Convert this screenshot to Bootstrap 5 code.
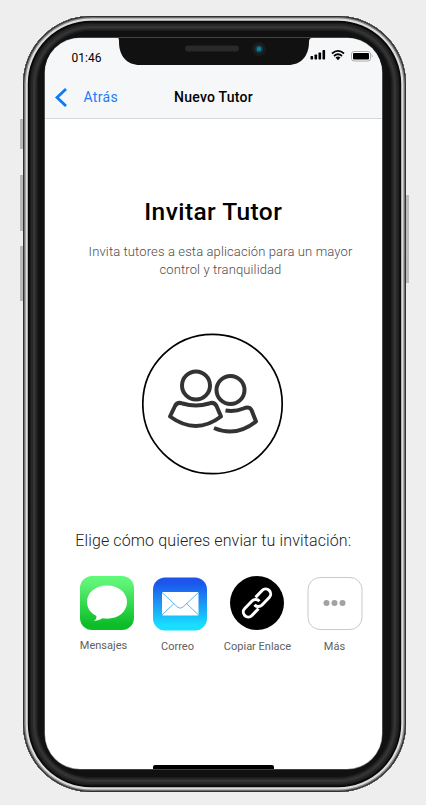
<!DOCTYPE html>
<html lang="es">
<head>
<meta charset="utf-8">
<meta name="viewport" content="width=device-width, initial-scale=1">
<title>Nuevo Tutor</title>
<link href="https://cdn.jsdelivr.net/npm/bootstrap@5.3.0/dist/css/bootstrap.min.css" rel="stylesheet">
<style>
body{background:#eee;font-family:Roboto,sans-serif;height:805px;overflow:hidden;color:#000}
.phone{width:383px;height:776px;margin:16px 0 0 22.5px;padding:22px 23.5px 23px 22px;border-radius:68px;background:#111;
box-shadow:inset 0 0 0 1.2px #303030,inset 0 0 0 2.6px #858585,inset 0 0 0 4.8px #dcdcdc,inset 0 0 0 6.5px #080808,inset 0 0 0 8px #1b1b1b,inset 0 0 0 10px #272727,inset 0 0 0 12px #353535,inset 0 0 0 13.5px #2c2c2c,inset 0 0 0 15px #1c1c1c}
.side{width:3px;background:#b8baba;left:-3px}
.side.right{left:383px;background:#bcbcbc}
.screen{height:731px;background:#fff;border-radius:35px;box-shadow:0 0 0 .6px #777;overflow:hidden}
.top-area{height:81px;background:#f5f7f9;border-bottom:1px solid #d5d7d8}
.notch{left:73px;top:-1px}
.status{height:38px;padding:13px 8px 0 27px;font-size:12px;line-height:15px}
.nav-row{height:42px;padding:0 10px;font-size:14px}
.nav-row a{color:#1f7cf5;width:119.600px;letter-spacing:.35px}
.nav-title{font-weight:500;letter-spacing:.24px}
.heading{font-size:24.500px;font-weight:500;line-height:30px;letter-spacing:.42px;margin-top:78px}
.intro{font-size:13px;font-weight:300;line-height:18px;letter-spacing:.12px;color:#4c4c4c;margin:16px 0 0 14.500px}
.people{width:142px;height:142px;margin:54px auto 0 97px}
.choose{font-size:16px;font-weight:300;line-height:22px;color:#222;letter-spacing:.12px;margin-top:55px}
.options{margin:23px 8px 0 26.500px}
.option{font-size:11px;line-height:14px;color:#606060}
.option svg{width:56px;height:56px;margin-bottom:8px}
.opt-a{width:72px}.opt-a span{padding-right:7px}
.opt-b{width:74px}.opt-b span{padding-right:5px}
.opt-c{width:80px}.opt-c span{padding-left:1px}.opt-d{width:75px}
.opt-b span,.opt-c span,.opt-d span{padding-top:1px}
.home-bar{width:121px;height:4px;left:108px;bottom:0;background:#000;border-radius:2px 2px 0 0}
</style>
<script src="https://cdn.jsdelivr.net/npm/bootstrap@5.3.0/dist/js/bootstrap.bundle.min.js"></script>
</head>
<body>
<div class="phone position-relative">
  <i class="side position-absolute" style="top:103px;height:30px"></i>
  <i class="side position-absolute" style="top:159px;height:56px"></i>
  <i class="side position-absolute" style="top:230px;height:55px"></i>
  <i class="side right position-absolute" style="top:179px;height:88px"></i>
  <main class="screen position-relative d-flex flex-column">
    <header class="top-area flex-shrink-0">
      <svg class="notch position-absolute" width="194" height="29" viewBox="0 0 194 29">
        <path d="M0 0H194V1Q191 1 191 5C191 19 183 28 170 28H22C9 28 1 19 1 5Q1 1 0 1Z" fill="#111"/>
        <rect x="67" y="8.500" width="54" height="6" rx="3" fill="#292929"/>
        <circle cx="141" cy="12" r="7" fill="#1b1b1b"/><circle cx="141" cy="12" r="3.800" fill="#104252"/><circle cx="141" cy="12" r="2.200" fill="#118099"/>
      </svg>
      <div class="status d-flex justify-content-between">
        <span>01:46</span>
        <svg width="64" height="14" viewBox="0 0 64 14" style="margin-top:-3px">
          <g fill="#000"><rect x=".5" y="8" width="2.600" height="3.500" rx=".7"/><rect x="4.500" y="6.500" width="2.600" height="5" rx=".7"/><rect x="8.500" y="4.500" width="2.600" height="7" rx=".7"/><rect x="12.500" y="2" width="2.600" height="9.500" rx=".7"/><path d="M25.500 9.400 28 12.200 30.500 9.400Q28 7.800 25.500 9.400Z"/></g>
          <path d="M22 5.500Q28 .3 34 5.500M24 8Q28 4.500 32 8" fill="none" stroke="#000" stroke-width="1.800"/>
          <rect x="41.500" y="3.500" width="19" height="9.500" rx="2.500" fill="#fff" stroke="#aaa"/><rect x="43" y="5" width="16" height="6.500" rx="1"/><path d="M61.800 6v4Q63.500 8 61.800 6" fill="#999"/>
        </svg>
      </div>
      <nav class="nav-row d-flex align-items-center">
        <a href="#" class="d-flex align-items-center text-decoration-none"><svg class="me-3" width="13" height="20" viewBox="0 0 13 20"><path d="M11 2 2 10.500 11 19" fill="none" stroke="#087bf5" stroke-width="2.800"/></svg>Atrás</a>
        <span class="nav-title">Nuevo Tutor</span>
      </nav>
    </header>
    <h1 class="heading text-center mb-0">Invitar Tutor</h1>
    <p class="intro text-center mb-0">Invita tutores a esta aplicación para un mayor<br>control y tranquilidad</p>
    <svg class="people flex-shrink-0" viewBox="0 0 142 142">
      <circle cx="70.500" cy="71" r="69.700" fill="#fff" stroke="#000" stroke-width="1.700"/>
      <g fill="none" stroke="#333" stroke-width="4" stroke-linejoin="round">
        <circle cx="54" cy="52.500" r="14"/><circle cx="88.500" cy="57" r="14"/>
        <path d="M28 83.500 33 73Q35.500 68.500 40.500 70.500Q54 74.500 67 70.500Q72 68.500 74.500 73L79 83.500Q54 102.500 28 83.500Z"/>
        <path d="M83.500 77.500Q93 79 101.500 75.500Q107 73 109.500 77L114 88.500Q94 104.500 72 95"/>
      </g>
    </svg>
    <p class="choose text-center mb-0">Elige cómo quieres enviar tu invitación:</p>
    <div class="options d-flex">
      <div class="option d-flex flex-column align-items-center opt-a">
        <svg viewBox="0 0 56 56"><defs><linearGradient id="green" x2="0" y2="1"><stop stop-color="#61fa78"/><stop offset=".15" stop-color="#5df276"/><stop offset=".9" stop-color="#0cbd27"/></linearGradient></defs><rect x="1" y="1" width="54" height="54" rx="12" fill="url(#green)"/><path d="M28 10.500C16.500 10.500 8 17.500 8 27C8 33 11.500 38 17.500 41Q18 43.500 15 46Q19.500 46 23.500 43.200L28 43.700C39.500 43.700 48 36.500 48 27S39.500 10.500 28 10.500Z" fill="#fff"/></svg>
        <span>Mensajes</span>
      </div>
      <div class="option d-flex flex-column align-items-center opt-b">
        <svg viewBox="0 0 56 56"><defs><linearGradient id="blue" x2="0" y2="1"><stop stop-color="#1e54e8"/><stop offset=".12" stop-color="#1c57ed"/><stop offset=".9" stop-color="#19deff"/></linearGradient></defs><rect x="1" y="2.500" width="54" height="53" rx="12" fill="url(#blue)"/><rect x="10" y="17" width="36.500" height="23.500" rx="1" fill="#fff"/><path d="M10 17.500 25.500 32Q28.300 34.500 31 32L46.500 17.500M10 40 22 28.500M46.500 40 34.500 28.500" fill="none" stroke="#60b4f5"/></svg>
        <span>Correo</span>
      </div>
      <div class="option d-flex flex-column align-items-center opt-c">
        <svg viewBox="0 0 56 56"><circle cx="28" cy="28" r="27"/><g transform="rotate(-46 28 28)" fill="none" stroke="#fff" stroke-width="3"><path d="M25 33H15.500A5 5 0 0 1 15.500 23H26A5 5 0 0 1 31 28.500"/><path d="M31 23H40.500A5 5 0 0 1 40.500 33H30A5 5 0 0 1 25 27.500"/></g></svg>
        <span>Copiar Enlace</span>
      </div>
      <div class="option d-flex flex-column align-items-center opt-d">
        <svg viewBox="0 0 56 56"><rect x="1" y="2.500" width="54" height="52" rx="12" fill="#fff" stroke="#c9c9c9"/><g fill="#a2a2a2"><circle cx="19.500" cy="28" r="3"/><circle cx="27.500" cy="28" r="3"/><circle cx="35.500" cy="28" r="3"/></g></svg>
        <span>Más</span>
      </div>
    </div>
    <div class="home-bar position-absolute"></div>
  </main>
</div>
</body>
</html>
